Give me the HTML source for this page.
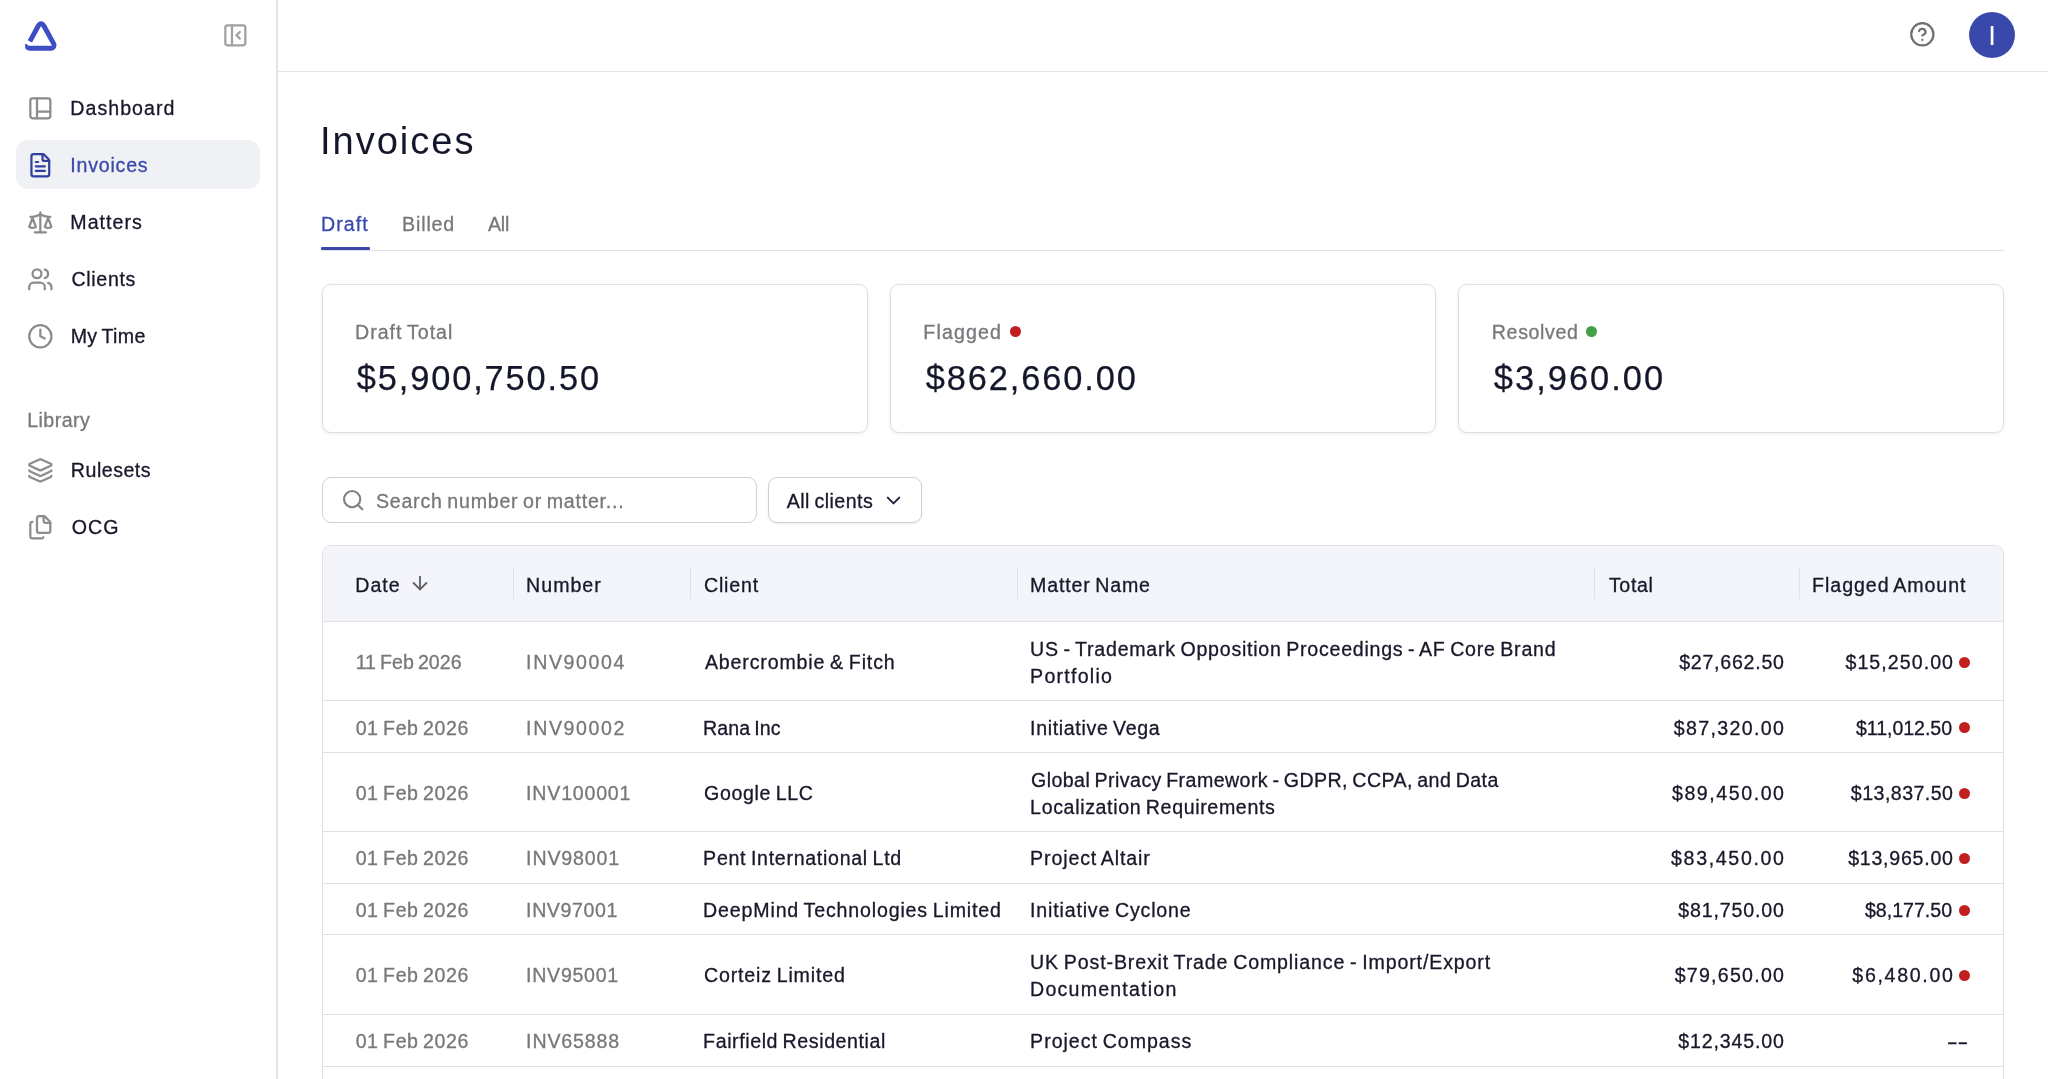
<!DOCTYPE html>
<html lang="en">
<head>
<meta charset="utf-8">
<title>Invoices</title>
<style>
*{box-sizing:border-box;margin:0;padding:0}
html,body{width:2048px;height:1079px;overflow:hidden;background:#fff}
body{font-family:"Liberation Sans",sans-serif;font-size:19.6px;color:#171829;position:relative;word-spacing:-1.5px;-webkit-text-stroke:.3px}
svg{display:block}
i{font-style:normal}
.t{position:absolute;white-space:nowrap;line-height:24px;display:block}

/* sidebar */
aside{position:absolute;left:0;top:0;width:278px;height:1079px;border-right:2px solid #e5e4ec;background:#fff}
.logo{position:absolute;left:20px;top:15px}
.collapse{position:absolute;left:222.1px;top:22.1px}
nav a{position:absolute;left:16px;width:244px;height:49px;border-radius:12px;display:block;color:#171829;text-decoration:none}
nav a.on{background:#f0f1f5;color:#3949ab}
nav a svg{position:absolute;left:11.2px;top:11.6px}
nav a span{position:absolute;left:55px;top:13px;line-height:24px;white-space:nowrap}
.lib{left:28px;top:408px;color:#77777c}

/* header */
header{position:absolute;left:278px;top:0;right:0;height:72px;border-bottom:1px solid #e3e3e8;background:#fff}
.help{position:absolute;left:1631.4px;top:21.3px}
.avatar{position:absolute;left:1691px;top:12px;width:46px;height:46px;border-radius:50%;background:#3949ab;color:#fff;text-align:center;line-height:48px;font-size:27.5px;letter-spacing:0;-webkit-text-stroke:0}

/* main */
h1{position:absolute;left:320px;top:117px;font-size:38.1px;font-weight:400;line-height:48px;white-space:nowrap;color:#14162a;-webkit-text-stroke:0}
.tabs{position:absolute;left:322px;top:200px;width:1682px;height:51px;border-bottom:1px solid #e0e0e6}
.tabs a{position:absolute;top:12px;line-height:24px;color:#77777c;text-decoration:none;white-space:nowrap}
.tabs a.on{color:#3949ab}
.tabs i{position:absolute;left:-1px;top:47px;width:49px;height:3px;background:#3949ab;border-radius:1px}

.card{position:absolute;top:284px;width:546px;height:149px;border:1px solid #dfdfe6;border-radius:9px;background:#fff;box-shadow:0 1px 3px rgba(40,40,90,.09)}
.card .lbl{left:33px;top:35px;color:#77777c}
.card .val{left:33px;top:71px;font-size:34.4px;line-height:44px;color:#14162a;-webkit-text-stroke:.25px}
.dot{position:absolute;width:11px;height:11px;border-radius:50%;background:#c22020}
.dot.g{background:#43a047}

.search{position:absolute;left:322px;top:477px;width:435px;height:46px;border:1px solid #cfcfd9;border-radius:9px;background:#fff}
.search svg{position:absolute;left:17.5px;top:10.3px}
.search .t{left:54px;top:11px;color:#77777c}
.filter{position:absolute;left:768px;top:477px;width:154px;height:46px;border:1px solid #cfcfd9;border-radius:9px;background:#fff;box-shadow:0 1px 2px rgba(40,40,80,.08)}
.filter .t{left:17px;top:11px}
.filter svg{position:absolute;left:113.1px;top:10.7px}

/* table */
.tbl{position:absolute;left:322px;top:545px;width:1682px;height:534px;border:1px solid #e0e0e6;border-bottom:0;border-radius:9px 9px 0 0;overflow:hidden;background:#fff}
.row{display:grid;grid-template-columns:190px 177px 327px 577px 205px 204px;border-bottom:1px solid #e0e0e6;align-items:center;line-height:27px}
.row>div{padding:13px 14px 11px;white-space:nowrap}
.row>div:first-child{padding-left:33px}
.row .g{color:#77777c}
.row .r{text-align:right;padding-right:15px}
.row .f{text-align:right;padding-right:50px;position:relative}
.row .f .dot{right:33px;top:50%;margin-top:-4.5px}
.row span{display:inline-block}
.hd{background:#f4f5fa;height:76px;position:relative}
.hd>div{position:relative;padding:14px 14px 10px}
.hd>div+div:before{content:"";position:absolute;left:0;top:10px;height:31px;width:1px;background:#e0e1e9}
.hd .arr{position:absolute;left:86px;top:14.2px}
.row.r5>div{padding-top:13px;padding-bottom:10px}
.row.r6>div{padding-top:13px;padding-bottom:12px}
.row.r2 span{position:relative;top:1px}
aside,header,main{will-change:transform}
main{position:absolute;left:0;top:0;width:2048px;height:1079px;overflow:hidden}
.row .f .dash{letter-spacing:0;transform:scaleX(1.62);transform-origin:100% 50%;position:relative;left:15.5px;top:1px}
.row .m.two span{position:relative;top:1px}
</style>
</head>
<body>
<aside>
  <div class="logo">
    <svg width="44" height="44" viewBox="0 0 44 44" fill="none" stroke="#3c4ec2" stroke-width="4.9" stroke-linejoin="round" stroke-linecap="butt">
      <path d="M9.85 26.45 L17.8 11.77 Q21.05 5.8 24.35 11.74 L33.8 28.85 A3 3 0 0 1 31.2 33.3 L9.9 33.3"/>
      <path fill="#3c4ec2" stroke="none" d="M10 30.85 L10 35.75 Q5 35.6 5.06 31.3 Q5 29.6 5.6 28.8 L6.9 28.9 Q7.2 30.9 10 30.85 Z"/>
    </svg>
  </div>
  <div class="collapse">
    <svg width="26.67" height="26.67" viewBox="0 0 24 24" fill="none" stroke-width="2" stroke-linecap="round" stroke-linejoin="round" stroke="#a0a0a4"><rect x="3" y="3" width="18" height="18" rx="2"/><path d="M9 3v18"/><path d="m16 15-3-3 3-3"/></svg>
  </div>
  <nav>
    <a style="top:83px"><svg width="26.67" height="26.67" viewBox="0 0 24 24" fill="none" stroke-width="2" stroke-linecap="round" stroke-linejoin="round" stroke="#8b8b90"><rect x="3" y="3" width="18" height="18" rx="2"/><path d="M9 3v18"/><path d="M9 15h12"/></svg><span id="n1" style="letter-spacing:1.035px;margin-left:-0.720px;">Dashboard</span></a>
    <a class="on" style="top:140px"><svg width="26.67" height="26.67" viewBox="0 0 24 24" fill="none" stroke-width="2" stroke-linecap="round" stroke-linejoin="round" stroke="#303f9f"><path d="M6 22a2 2 0 0 1-2-2V4a2 2 0 0 1 2-2h8a2.4 2.4 0 0 1 1.704.706l3.588 3.588A2.4 2.4 0 0 1 20 8v12a2 2 0 0 1-2 2z"/><path d="M14 2v5a1 1 0 0 0 1 1h5"/><path d="M10 9H8"/><path d="M16 13H8"/><path d="M16 17H8"/></svg><span id="n2" style="letter-spacing:0.784px;margin-left:-0.720px;">Invoices</span></a>
    <a style="top:197px"><svg width="26.67" height="26.67" viewBox="0 0 24 24" fill="none" stroke-width="2" stroke-linecap="round" stroke-linejoin="round" stroke="#8b8b90"><path d="m16 16 3-8 3 8c-.87.65-1.92 1-3 1s-2.13-.35-3-1Z"/><path d="m2 16 3-8 3 8c-.87.65-1.92 1-3 1s-2.13-.35-3-1Z"/><path d="M7 21h10"/><path d="M12 3v18"/><path d="M3 7h2c2 0 5-1 7-2 2 1 5 2 7 2h2"/></svg><span id="n3" style="letter-spacing:1.050px;margin-left:-0.720px;">Matters</span></a>
    <a style="top:254px"><svg width="26.67" height="26.67" viewBox="0 0 24 24" fill="none" stroke-width="2" stroke-linecap="round" stroke-linejoin="round" stroke="#8b8b90"><path d="M16 21v-2a4 4 0 0 0-4-4H6a4 4 0 0 0-4 4v2"/><circle cx="9" cy="7" r="4"/><path d="M22 21v-2a4 4 0 0 0-3-3.87"/><path d="M16 3.13a4 4 0 0 1 0 7.75"/></svg><span id="n4" style="letter-spacing:0.660px;margin-left:0.540px;">Clients</span></a>
    <a style="top:311px"><svg width="26.67" height="26.67" viewBox="0 0 24 24" fill="none" stroke-width="2" stroke-linecap="round" stroke-linejoin="round" stroke="#8b8b90"><circle cx="12" cy="12" r="10"/><path d="M12 6v6l4 2"/></svg><span id="n5" style="letter-spacing:0.360px;margin-left:-0.360px;">My Time</span></a>
    <div id="lib" class="t lib" style="letter-spacing:0.420px;margin-left:-0.720px;">Library</div>
    <a style="top:445px"><svg width="26.67" height="26.67" viewBox="0 0 24 24" fill="none" stroke-width="2" stroke-linecap="round" stroke-linejoin="round" stroke="#8b8b90"><path d="M12.83 2.18a2 2 0 0 0-1.66 0L2.6 6.08a1 1 0 0 0 0 1.83l8.58 3.91a2 2 0 0 0 1.66 0l8.58-3.9a1 1 0 0 0 0-1.83z"/><path d="M2 12a1 1 0 0 0 .58.91l8.6 3.91a2 2 0 0 0 1.65 0l8.58-3.9A1 1 0 0 0 22 12"/><path d="M2 17a1 1 0 0 0 .58.91l8.6 3.91a2 2 0 0 0 1.65 0l8.58-3.9A1 1 0 0 0 22 17"/></svg><span id="n6" style="letter-spacing:0.501px;margin-left:-0.180px;">Rulesets</span></a>
    <a style="top:502px"><svg width="26.67" height="26.67" viewBox="0 0 24 24" fill="none" stroke-width="2" stroke-linecap="round" stroke-linejoin="round" stroke="#8b8b90"><path d="M15 2a2 2 0 0 1 1.414.586l4 4A2 2 0 0 1 21 8v7a2 2 0 0 1-2 2h-8a2 2 0 0 1-2-2V4a2 2 0 0 1 2-2z"/><path d="M15 2v4a2 2 0 0 0 2 2h4"/><path d="M5 7a2 2 0 0 0-2 2v11a2 2 0 0 0 2 2h8a2 2 0 0 0 1.732-1"/></svg><span id="n7" style="letter-spacing:1.080px;margin-left:0.720px;">OCG</span></a>
  </nav>
</aside>
<header>
  <div class="help"><svg width="26.67" height="26.67" viewBox="0 0 24 24" fill="none" stroke-width="2" stroke-linecap="round" stroke-linejoin="round" stroke="#6f6f74"><circle cx="12" cy="12" r="10"/><path d="M9.09 9a3 3 0 0 1 5.83 1c0 2-3 3-3 3"/><path d="M12 17h.01"/></svg></div>
  <div class="avatar" id="av">I</div>
</header>
<main>
  <h1 id="h1" style="letter-spacing:1.967px;">Invoices</h1>
  <div class="tabs">
    <a id="tab1" class="on" style="letter-spacing:1.035px;margin-left:-0.900px;left:0;">Draft</a>
    <a id="tab2" style="letter-spacing:0.846px;margin-left:-0.900px;left:81px;">Billed</a>
    <a id="tab3" style="letter-spacing:-0.180px;margin-left:0.900px;left:165px;">All</a>
    <i></i>
  </div>
  <section class="card" style="left:322px"><span id="c1l" class="t lbl" style="letter-spacing:0.972px;margin-left:-0.900px;">Draft Total</span><span id="c1v" class="t val" style="letter-spacing:1.875px;margin-left:0.720px;">$5,900,750.50</span></section>
  <section class="card" style="left:890px"><span id="c2l" class="t lbl" style="letter-spacing:1.140px;margin-left:-0.720px;">Flagged</span><i class="dot" style="left:118.8px;top:40.9px"></i><span id="c2v" class="t val" style="letter-spacing:1.872px;margin-left:1.800px;">$862,660.00</span></section>
  <section class="card" style="left:1458px"><span id="c3l" class="t lbl" style="letter-spacing:0.630px;margin-left:-0.180px;">Resolved</span><i class="dot g" style="left:127.2px;top:40.9px"></i><span id="c3v" class="t val" style="letter-spacing:2.047px;margin-left:1.800px;">$3,960.00</span></section>

  <div class="search">
    <svg width="24.3" height="24.3" viewBox="0 0 24 24" fill="none" stroke="#808085" stroke-width="2.1" stroke-linecap="round" stroke-linejoin="round"><circle cx="11" cy="11" r="8"/><path d="m21 21-4.3-4.3"/></svg>
    <span id="srch" class="t" style="letter-spacing:0.767px;margin-left:-1.080px;">Search number or matter...</span>
  </div>
  <div class="filter"><span id="flt" class="t" style="letter-spacing:0.486px;margin-left:0.720px;">All clients</span>
    <svg width="23" height="23" viewBox="0 0 24 24" fill="none" stroke="#24253a" stroke-width="2.1" stroke-linecap="round" stroke-linejoin="round"><path d="m6 9 6 6 6-6"/></svg>
  </div>

  <div class="tbl">
    <div class="row hd"><div><span id="hd1" style="letter-spacing:0.990px;margin-left:-0.720px;">Date</span><svg class="arr" width="22" height="22" viewBox="0 0 24 24" fill="none" stroke="#5f5f66" stroke-width="2" stroke-linecap="round" stroke-linejoin="round"><path d="M12 5v14"/><path d="m19 12-7 7-7-7"/></svg></div><div><span id="hd2" style="letter-spacing:0.990px;margin-left:-0.900px;">Number</span></div><div><span id="hd3" style="letter-spacing:0.810px;">Client</span></div><div><span id="hd4" style="letter-spacing:0.810px;margin-left:-0.900px;">Matter Name</span></div><div><span id="hd5" style="letter-spacing:0.675px;margin-left:0.900px;">Total</span></div><div><span id="hd6" style="letter-spacing:0.935px;margin-left:-0.900px;">Flagged Amount</span></div></div>
    <div class="row r1"><div class="g"><span id="r1d" style="letter-spacing:0.036px;margin-left:-0.360px;">11 Feb 2026</span></div><div class="g"><span id="r1n" style="letter-spacing:1.607px;margin-left:-0.900px;">INV90004</span></div><div><span id="r1c" style="letter-spacing:0.850px;margin-left:0.900px;">Abercrombie &amp; Fitch</span></div><div class="m two"><span id="r1m1" style="letter-spacing:0.744px;margin-left:-0.900px;display:block;">US - Trademark Opposition Proceedings - AF Core Brand</span><span id="r1m2" style="letter-spacing:1.238px;margin-left:-0.900px;display:block;">Portfolio</span></div><div class="r"><span id="r1t" style="letter-spacing:0.750px;margin-right:-0.750px;">$27,662.50</span></div><div class="f"><span id="r1f" style="letter-spacing:1.050px;margin-right:-1.050px;">$15,250.00</span><i class="dot"></i></div></div>
    <div class="row r2"><div class="g"><span id="r2d" style="letter-spacing:0.576px;margin-left:-0.360px;">01 Feb 2026</span></div><div class="g"><span id="r2n" style="letter-spacing:1.607px;margin-left:-0.900px;">INV90002</span></div><div><span id="r2c" style="letter-spacing:0.064px;margin-left:-0.900px;">Rana Inc</span></div><div class="m"><span id="r2m1" style="letter-spacing:0.643px;margin-left:-0.900px;display:block;">Initiative Vega</span></div><div class="r"><span id="r2t" style="letter-spacing:1.350px;margin-right:-1.350px;">$87,320.00</span></div><div class="f"><span id="r2f" style="letter-spacing:-0.050px;margin-right:0.950px;">$11,012.50</span><i class="dot"></i></div></div>
    <div class="row r3"><div class="g"><span id="r3d" style="letter-spacing:0.576px;margin-left:-0.360px;">01 Feb 2026</span></div><div class="g"><span id="r3n" style="letter-spacing:0.787px;margin-left:-0.900px;">INV100001</span></div><div><span id="r3c" style="letter-spacing:0.650px;">Google LLC</span></div><div class="m two"><span id="r3m1" style="letter-spacing:0.430px;display:block;">Global Privacy Framework - GDPR, CCPA, and Data</span><span id="r3m2" style="letter-spacing:0.637px;margin-left:-0.900px;display:block;">Localization Requirements</span></div><div class="r"><span id="r3t" style="letter-spacing:1.550px;margin-right:-1.550px;">$89,450.00</span></div><div class="f"><span id="r3f" style="letter-spacing:0.450px;margin-right:-0.450px;">$13,837.50</span><i class="dot"></i></div></div>
    <div class="row r4"><div class="g"><span id="r4d" style="letter-spacing:0.576px;margin-left:-0.360px;">01 Feb 2026</span></div><div class="g"><span id="r4n" style="letter-spacing:0.836px;margin-left:-0.900px;">INV98001</span></div><div><span id="r4c" style="letter-spacing:0.707px;margin-left:-0.900px;">Pent International Ltd</span></div><div class="m"><span id="r4m1" style="letter-spacing:0.865px;margin-left:-0.900px;display:block;">Project Altair</span></div><div class="r"><span id="r4t" style="letter-spacing:1.650px;margin-right:-1.650px;">$83,450.00</span></div><div class="f"><span id="r4f" style="letter-spacing:0.750px;margin-right:-0.750px;">$13,965.00</span><i class="dot"></i></div></div>
    <div class="row r5"><div class="g"><span id="r5d" style="letter-spacing:0.576px;margin-left:-0.360px;">01 Feb 2026</span></div><div class="g"><span id="r5n" style="letter-spacing:0.579px;margin-left:-0.900px;">INV97001</span></div><div><span id="r5c" style="letter-spacing:0.836px;margin-left:-0.900px;">DeepMind Technologies Limited</span></div><div class="m"><span id="r5m1" style="letter-spacing:0.821px;margin-left:-0.900px;display:block;">Initiative Cyclone</span></div><div class="r"><span id="r5t" style="letter-spacing:0.850px;margin-right:-0.850px;">$81,750.00</span></div><div class="f"><span id="r5f" style="letter-spacing:0.000px;margin-right:0.900px;">$8,177.50</span><i class="dot"></i></div></div>
    <div class="row r6"><div class="g"><span id="r6d" style="letter-spacing:0.576px;margin-left:-0.360px;">01 Feb 2026</span></div><div class="g"><span id="r6n" style="letter-spacing:0.707px;margin-left:-0.900px;">INV95001</span></div><div><span id="r6c" style="letter-spacing:0.836px;">Corteiz Limited</span></div><div class="m two"><span id="r6m1" style="letter-spacing:0.861px;margin-left:-0.900px;display:block;">UK Post-Brexit Trade Compliance - Import/Export</span><span id="r6m2" style="letter-spacing:1.200px;margin-left:-0.900px;display:block;">Documentation</span></div><div class="r"><span id="r6t" style="letter-spacing:1.250px;margin-right:-1.250px;">$79,650.00</span></div><div class="f"><span id="r6f" style="letter-spacing:1.688px;margin-right:-1.687px;">$6,480.00</span><i class="dot"></i></div></div>
    <div class="row r7"><div class="g"><span id="r7d" style="letter-spacing:0.576px;margin-left:-0.360px;">01 Feb 2026</span></div><div class="g"><span id="r7n" style="letter-spacing:0.836px;margin-left:-0.900px;">INV65888</span></div><div><span id="r7c" style="letter-spacing:0.585px;margin-left:-0.900px;">Fairfield Residential</span></div><div class="m"><span id="r7m1" style="letter-spacing:0.964px;margin-left:-0.900px;display:block;">Project Compass</span></div><div class="r"><span id="r7t" style="letter-spacing:0.850px;margin-right:-0.850px;">$12,345.00</span></div><div class="f"><span class="dash">--</span></div></div>
  </div>
</main>
</body>
</html>
